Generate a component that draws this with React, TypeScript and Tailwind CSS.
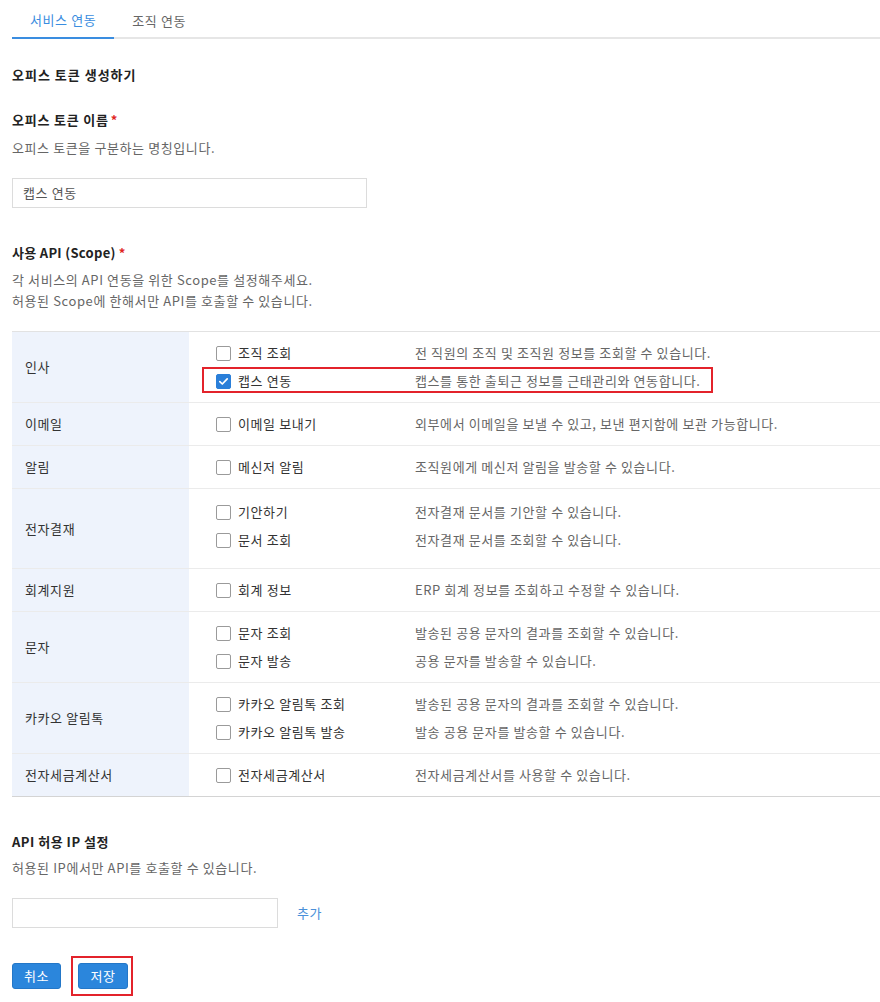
import React from "react";

type Item = { label: string; desc: string; checked?: boolean; highlight?: boolean };
type Row = { name: string; items: Item[]; pad?: string };

const rows: Row[] = [
  {
    name: "인사",
    items: [
      { label: "조직 조회", desc: "전 직원의 조직 및 조직원 정보를 조회할 수 있습니다." },
      { label: "캡스 연동", desc: "캡스를 통한 출퇴근 정보를 근태관리와 연동합니다.", checked: true, highlight: true },
    ],
  },
  { name: "이메일", items: [{ label: "이메일 보내기", desc: "외부에서 이메일을 보낼 수 있고, 보낸 편지함에 보관 가능합니다." }] },
  { name: "알림", items: [{ label: "메신저 알림", desc: "조직원에게 메신저 알림을 발송할 수 있습니다." }] },
  {
    name: "전자결재",
    pad: "pt-[9px] pb-[14px]",
    items: [
      { label: "기안하기", desc: "전자결재 문서를 기안할 수 있습니다." },
      { label: "문서 조회", desc: "전자결재 문서를 조회할 수 있습니다." },
    ],
  },
  { name: "회계지원", items: [{ label: "회계 정보", desc: "ERP 회계 정보를 조회하고 수정할 수 있습니다." }] },
  {
    name: "문자",
    items: [
      { label: "문자 조회", desc: "발송된 공용 문자의 결과를 조회할 수 있습니다." },
      { label: "문자 발송", desc: "공용 문자를 발송할 수 있습니다." },
    ],
  },
  {
    name: "카카오 알림톡",
    items: [
      { label: "카카오 알림톡 조회", desc: "발송된 공용 문자의 결과를 조회할 수 있습니다." },
      { label: "카카오 알림톡 발송", desc: "발송 공용 문자를 발송할 수 있습니다." },
    ],
  },
  { name: "전자세금계산서", items: [{ label: "전자세금계산서", desc: "전자세금계산서를 사용할 수 있습니다." }] },
];

function Checkbox({ checked }: { checked?: boolean }) {
  if (checked) {
    return (
      <span className="w-[15px] h-[15px] rounded-[2px] bg-[#2a7fd9] border border-[#2a7fd9] flex items-center justify-center shrink-0">
        <svg width="11" height="11" viewBox="0 0 11 11">
          <path d="M1.8 5.6 L4.3 8 L9.2 2.8" stroke="#fff" strokeWidth="1.7" fill="none" strokeLinecap="round" strokeLinejoin="round" />
        </svg>
      </span>
    );
  }
  return <span className="w-[15px] h-[15px] rounded-[2px] bg-white border border-[#9a9a9a] shrink-0" />;
}

export default function App() {
  return (
    <div
      className="w-[880px] min-h-[1002px] bg-white pl-[12px] text-[13px] tracking-[0.6px] text-[#333]"
      style={{ fontFamily: "'Noto Sans CJK KR', 'Noto Sans', sans-serif" }}
    >
      {/* Tabs */}
      <div className="flex border-b-2 border-[#e6e6e6]">
        <div className="h-[39px] pt-[5px] pb-[2px] px-[18px] flex items-center text-[#3a8de0] border-b-2 border-[#3a8de0] -mb-[2px]">
          서비스 연동
        </div>
        <div className="h-[37px] pt-[5px] px-[18px] flex items-center text-[#666]">조직 연동</div>
      </div>

      <div className="mt-[26px] leading-[20px] font-bold tracking-[1px] text-[#222]">오피스 토큰 생성하기</div>

      <div className="mt-[25px] leading-[20px] font-bold tracking-[0.8px] text-[#222]">
        오피스 토큰 이름<span className="text-[#e02424] ml-[2px]">*</span>
      </div>
      <div className="mt-[8px] leading-[20px] text-[#666]">오피스 토큰을 구분하는 명칭입니다.</div>
      <div className="mt-[20px] w-[355px] h-[30px] border border-[#dcdcdc] flex items-center px-[10px] text-[#555]">
        캡스 연동
      </div>

      <div className="mt-[35px] leading-[20px] font-bold tracking-[0.3px] text-[#222]">
        사용 API (Scope)<span className="text-[#e02424] ml-[3px]">*</span>
      </div>
      <div className="mt-[6px] leading-[21px] text-[#666]">
        <div>각 서비스의 API 연동을 위한 Scope를 설정해주세요.</div>
        <div>허용된 Scope에 한해서만 API를 호출할 수 있습니다.</div>
      </div>

      {/* Scope table */}
      <div className="mt-[20px] border-t border-[#e2e2e2] border-b border-b-[#d4d4d4]">
        {rows.map((row, ri) => (
          <div key={row.name} className={`flex ${ri > 0 ? "border-t border-[#ebebeb]" : ""}`}>
            <div className="w-[177px] shrink-0 bg-[#eef3fc] flex items-center pl-[13px] text-[#333]">{row.name}</div>
            <div className={`flex-1 pl-[27px] ${row.pad ?? "py-[7px]"}`}>
              {row.items.map((it) => (
                <div key={it.label} className="relative h-[28px] flex items-center">
                  {it.highlight && (
                    <span className="absolute left-[-14px] top-0 w-[511px] h-[26px] border-2 border-[#e3232b] pointer-events-none" />
                  )}
                  <div className="w-[199px] shrink-0 flex items-center gap-[7px] text-[#333]">
                    <Checkbox checked={it.checked} />
                    <span>{it.label}</span>
                  </div>
                  <div className="text-[#666]">{it.desc}</div>
                </div>
              ))}
            </div>
          </div>
        ))}
      </div>

      <div className="mt-[35px] leading-[20px] font-bold tracking-[0.5px] text-[#222]">API 허용 IP 설정</div>
      <div className="mt-[6px] leading-[20px] text-[#666]">허용된 IP에서만 API를 호출할 수 있습니다.</div>
      <div className="mt-[20px] flex items-center">
        <div className="w-[266px] h-[30px] border border-[#dcdcdc]" />
        <span className="ml-[19px] text-[#4a90d9]">추가</span>
      </div>

      <div className="mt-[35px] flex items-center gap-[17px]">
        <button className="w-[49px] h-[26px] rounded-[3px] bg-[#2b86dc] border border-[#2377c8] text-white text-[13px] flex items-center justify-center">
          취소
        </button>
        <div className="relative">
          <span className="absolute left-[-7px] top-[-7px] w-[62px] h-[40px] border-2 border-[#e3232b] pointer-events-none" />
          <button className="w-[50px] h-[26px] rounded-[3px] bg-[#2b86dc] border border-[#2377c8] text-white text-[13px] flex items-center justify-center">
            저장
          </button>
        </div>
      </div>
    </div>
  );
}
